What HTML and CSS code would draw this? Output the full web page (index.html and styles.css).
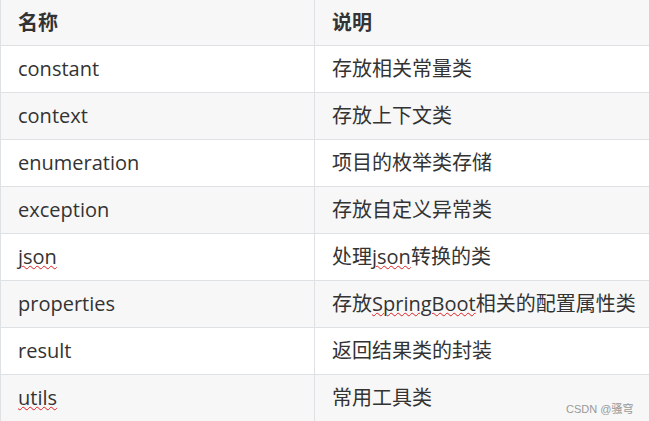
FILE: index.html
```html
<!DOCTYPE html>
<html lang="zh-CN">
<head>
<meta charset="utf-8">
<link rel="stylesheet" href="styles.css">
</head>
<body>
<div class="wrap">
<table class="tbl">
<thead>
<tr><th class="c1">名称</th><th class="c2">说明</th></tr>
</thead>
<tbody>
<tr><td>constant</td><td>存放相关常量类</td></tr>
<tr><td>context</td><td>存放上下文类</td></tr>
<tr><td>enumeration</td><td>项目的枚举类存储</td></tr>
<tr><td>exception</td><td>存放自定义异常类</td></tr>
<tr><td><span class="sp">json</span></td><td>处理<span class="sp">json</span>转换的类</td></tr>
<tr><td>properties</td><td>存放<span class="sp">SpringBoot</span>相关的配置属性类</td></tr>
<tr><td>result</td><td>返回结果类的封装</td></tr>
<tr><td><span class="sp">utils</span></td><td>常用工具类</td></tr>
</tbody>
</table>
<div class="mark">CSDN @骚穹</div>
</div>
</body>
</html>
```
FILE: styles.css
```css
html, body {
  margin: 0;
  padding: 0;
  background: #ffffff;
  overflow: hidden;
}
.wrap {
  position: relative;
  width: 649px;
  height: 421px;
  overflow: hidden;
}
.tbl {
  border-collapse: collapse;
  width: 680px;
  margin-top: -1px;
  font-family: "Open Sans", "Noto Sans CJK SC", sans-serif;
  font-size: 20px;
  line-height: 24px;
  color: #333333;
  table-layout: fixed;
}
.tbl th, .tbl td {
  border: 1px solid #dfe2e5;
  text-align: left;
  padding: 0 17px;
  height: 46px;
  box-sizing: border-box;
  vertical-align: middle;
  white-space: nowrap;
}
.tbl th {
  font-weight: 700;
  background: #f7f7f7;
  height: 46px;
}
.tbl .c1 { width: 314px; }
.tbl tbody tr:nth-child(even) td { background: #f7f7f7; }
.tbl tbody tr:nth-child(odd) td { background: #ffffff; }
.tbl tbody td { height: 47px; }
.sp {
  text-decoration: underline wavy #e02020;
  text-decoration-thickness: 1px;
  text-underline-offset: 1px;
}
.mark {
  position: absolute;
  left: 566px;
  top: 400px;
  font-family: "Liberation Sans", "Noto Sans CJK SC", sans-serif;
  font-size: 11px;
  color: #999999;
}
```
